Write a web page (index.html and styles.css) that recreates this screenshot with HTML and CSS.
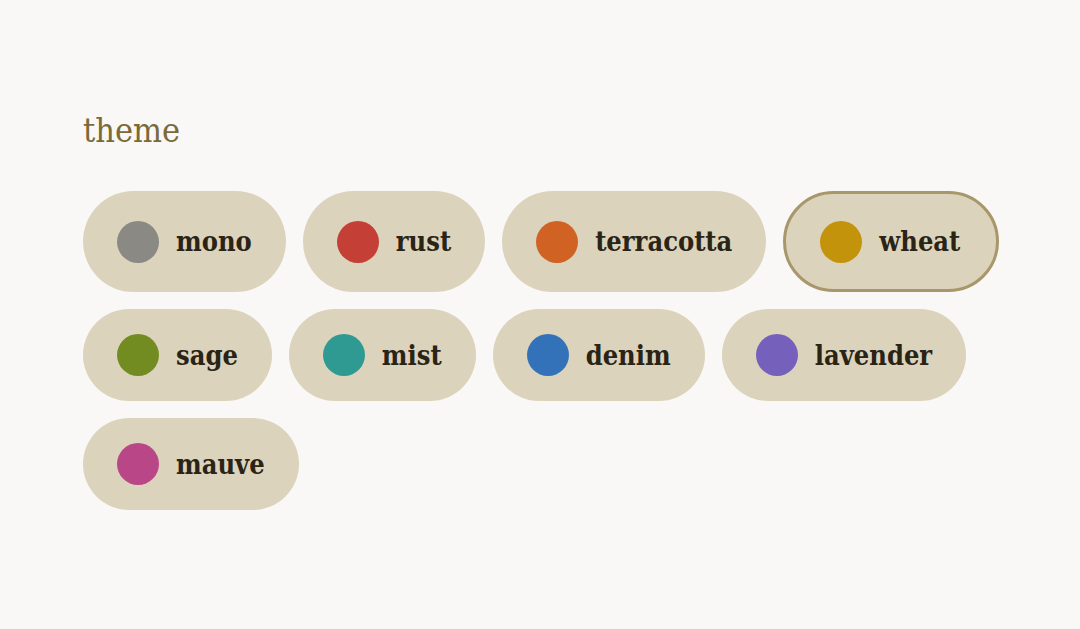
FILE: index.html
```html
<!DOCTYPE html>
<html lang="en">
<head>
  <meta charset="UTF-8" />
  <meta name="viewport" content="width=device-width, initial-scale=1.0" />
  <title>theme</title>
  <link rel="stylesheet" href="styles.css">
</head>
<body>
  <h2 class="label">theme</h2>

  <div class="chips">
    <button class="chip"><span class="dot" style="background:#8a8984"></span>mono</button>
    <button class="chip"><span class="dot" style="background:#c43f35"></span>rust</button>
    <button class="chip"><span class="dot" style="background:#d06224"></span>terracotta</button>
    <button class="chip active"><span class="dot" style="background:#c4930c"></span>wheat</button>
    <button class="chip"><span class="dot" style="background:#738c22"></span>sage</button>
    <button class="chip"><span class="dot" style="background:#2f9a91"></span>mist</button>
    <button class="chip"><span class="dot" style="background:#3372b8"></span>denim</button>
    <button class="chip"><span class="dot" style="background:#7561bc"></span>lavender</button>
    <button class="chip"><span class="dot" style="background:#b94787"></span>mauve</button>
  </div>
</body>
</html>
```

FILE: styles.css
```css
body { margin: 0; padding: 108px 40px 108px 83px; background: #f9f8f6; font-family: "DejaVu Serif Condensed", "DejaVu Serif", serif; }
.label { margin: 0 0 39px; font-size: 34px; font-weight: normal; color: #7a6a3a; line-height: 1.3; }
.chips { display: flex; flex-wrap: wrap; gap: 17px; max-width: 940px; }
.chip { display: flex; align-items: center; gap: 17px; box-sizing: border-box; min-height: 92px; padding: 0 34px; border: none; border-radius: 999px; background: #dcd3bc; color: #2a2416; font-family: inherit; font-size: 27px; font-weight: bold; cursor: pointer; }
.chip.active { min-height: 101px; padding: 0 36px 0 34px; border: 3px solid #a8976a; }
.dot { width: 42px; height: 42px; border-radius: 50%; flex: none; }
```
